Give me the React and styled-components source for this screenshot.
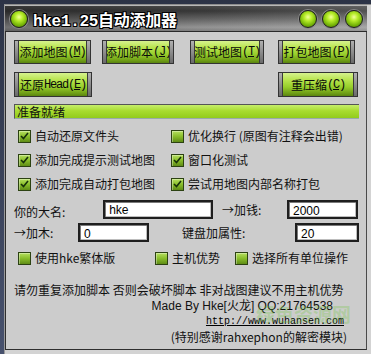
import React from 'react';
import styled, { createGlobalStyle } from 'styled-components';

const GlobalStyle = createGlobalStyle`
  html, body { margin: 0; padding: 0; background: #3b4560; overflow: hidden; }
  #root { width: 371px; height: 354px; }
`;

const CJK = `"Noto Sans CJK SC", "Noto Sans", sans-serif`;
const MONO = `"Liberation Mono", "Noto Sans CJK SC", monospace`;

const Screen = styled.div`
  width: 371px;
  height: 354px;
  box-sizing: border-box;
  padding: 4px 0 0 4px;
  background: linear-gradient(to bottom, #2c3346, #47516d);
  display: flex;
`;

const Window = styled.div`
  flex: 1;
  display: flex;
  flex-direction: column;
  background: #d3d3d3;
  border-top: 1px solid #8c8c8c;
  border-left: 1px solid #9a9a9a;
  padding: 0 5px 4px 0;
`;

const TitleBar = styled.div`
  height: 27px;
  box-sizing: border-box;
  display: flex;
  align-items: center;
  padding: 0 4px 0 4px;
  border-top: 1px solid #b8b8b8;
  border-bottom: 1px solid #2a2a2a;
  background:
    linear-gradient(to right, rgba(0, 0, 0, 0.28), rgba(0, 0, 0, 0.05) 55%, rgba(255, 255, 255, 0.12)),
    linear-gradient(to bottom, #4c4c4c 0%, #3a3a3a 20%, #6c6c6c 55%, #9c9c9c 85%, #858585 100%);
`;

const Ball = styled.span`
  width: 18px;
  height: 18px;
  box-sizing: border-box;
  border-radius: 50%;
  flex: none;
  border: 1px solid #1e1e1e;
  box-shadow: 0 0 0 1px #8a8a8a;
  margin-left: ${(p) => p.$ml || 0}px;
  background: radial-gradient(circle at 50% 38%, #f2ff9a 0%, #b6ec2a 30%, #7ab80a 62%, #3d6a00 100%);
`;

const TitleText = styled.span`
  margin-left: 5px;
  flex: 1;
  font-family: ${MONO};
  font-size: 16px;
  font-weight: bold;
  color: #ffffff;
  letter-spacing: -0.3px;
  text-shadow: 1px 1px 0 #000, -1px -1px 0 #000, 1px -1px 0 #000, -1px 1px 0 #000, 0 1px 0 #000, 1px 0 0 #000;
`;

const Panel = styled.div`
  flex: 1;
  display: flex;
  flex-direction: column;
  background: #cccccc;
  border-left: 1px solid #2e2e2e;
  border-right: 1px solid #4a4a4a;
  border-bottom: 1px solid #2e2e2e;
  padding: 8px 7px 0 8px;
  position: relative;
  font-family: ${CJK};
  font-size: 12px;
  color: #111;
`;

const ButtonGrid = styled.div`
  display: grid;
  grid-template-columns: 88px 88px 88px auto;
  grid-template-rows: 24px 25px;
  row-gap: 8px;
`;

const Btn = styled.div`
  grid-column: ${(p) => p.$col || 'auto'};
  grid-row: ${(p) => p.$row || 'auto'};
  width: ${(p) => p.$w}px;
  height: 100%;
  box-sizing: border-box;
  border: 1px solid #333;
  position: relative;
  display: flex;
  align-items: center;
  justify-content: center;
  font-size: 12px;
  line-height: 1;
  color: #0a0a0a;
  background: linear-gradient(to bottom, #d6f28e 0%, #b8e44e 30%, #98cf2c 60%, #6f9e16 88%, #5a8410 100%);
  &::before,
  &::after {
    content: '';
    position: absolute;
    top: 0;
    bottom: 0;
    width: 3px;
    background: linear-gradient(to bottom, #b0b0b0, #6a6a6a);
  }
  &::before { left: 0; border-right: 1px solid #3a3a3a; }
  &::after { right: 0; border-left: 1px solid #3a3a3a; }
`;

const Key = styled.span`
  font-family: ${MONO};
  font-size: 12px;
  letter-spacing: -1.2px;
  u { text-underline-offset: 1px; }
`;

const Status = styled.div`
  margin-top: 7px;
  height: 15px;
  box-sizing: border-box;
  border-top: 1px solid #555;
  border-left: 1px solid #555;
  border-bottom: 1px solid #9aa;
  display: flex;
  align-items: center;
  padding-left: 2px;
  line-height: 1;
  background: linear-gradient(to bottom, #c6ee6a 0%, #a8dc30 45%, #92cc1c 100%);
`;

const CheckGrid = styled.div`
  margin-top: 5px;
  display: grid;
  grid-template-columns: ${(p) => p.$cols};
  grid-auto-rows: ${(p) => p.$rowH}px;
  padding-left: 4px;
`;

const CheckItem = styled.label`
  display: flex;
  align-items: center;
  gap: 4px;
  white-space: nowrap;
  line-height: 1;
`;

const Box = styled.span`
  width: 13px;
  height: 13px;
  box-sizing: border-box;
  flex: none;
  border: 1px solid #2c4212;
  display: flex;
  align-items: center;
  justify-content: center;
  background: linear-gradient(to bottom, #b6e060 0%, #88bd2a 50%, #5f8c16 100%);
  box-shadow: inset 1px 1px 0 rgba(255, 255, 255, 0.35);
`;

const Check = ({ checked, children }) => (
  <CheckItem>
    <Box>
      {checked && (
        <svg width="9" height="8" viewBox="0 0 9 8">
          <path d="M1 4 L3.5 6.5 L8 1" fill="none" stroke="#17300a" strokeWidth="1.6" />
        </svg>
      )}
    </Box>
    <span>{children}</span>
  </CheckItem>
);

const FieldRow = styled.div`
  margin-top: 4px;
  height: ${(p) => p.$h}px;
  display: flex;
  align-items: center;
`;

const Label = styled.span`
  width: ${(p) => p.$w}px;
  flex: none;
  margin-left: ${(p) => p.$ml || 0}px;
  white-space: nowrap;
  line-height: 1;
  padding-top: ${(p) => p.$pt || 0}px;
`;

const Input = styled.div`
  width: ${(p) => p.$w}px;
  height: 100%;
  flex: none;
  box-sizing: border-box;
  border: 2px solid #1e1e1e;
  box-shadow: inset 1px 1px 0 #7a7a7a, inset -1px -1px 0 #bdbdbd;
  background: #fff;
  display: flex;
  align-items: center;
  padding: 2px 0 0 4px;
  font-family: ${(p) => (p.$mono ? MONO : `"Liberation Sans", Arial, sans-serif`)};
  font-size: 12px;
  letter-spacing: ${(p) => (p.$mono ? '-1px' : '0')};
  color: #000;
`;

const Notes = styled.div`
  margin-top: 13px;
  display: flex;
  flex-direction: column;
`;

const Line = styled.div`
  height: ${(p) => p.$h || 15}px;
  display: flex;
  align-items: center;
  justify-content: ${(p) => (p.$right ? 'flex-end' : 'flex-start')};
  padding-right: ${(p) => p.$pr || 0}px;
  white-space: nowrap;
  line-height: 1;
  font-family: ${(p) => (p.$sans ? `"Liberation Sans", "Noto Sans CJK SC", sans-serif` : CJK)};
`;

const Link = styled.span`
  font-family: "Liberation Mono", monospace;
  font-size: 10px;
  text-decoration: underline;
  color: #000;
`;

const Watermark = styled.span`
  position: absolute;
  left: 250px;
  top: 268px;
  font-family: ${CJK};
  font-size: 19px;
  font-weight: bold;
  color: rgba(110, 200, 60, 0.3);
  pointer-events: none;
`;

export default function App() {
  return (
    <>
      <GlobalStyle />
      <Screen>
        <Window>
          <TitleBar>
            <Ball $ml={1} />
            <TitleText>hke1.25自动添加器</TitleText>
            <Ball />
            <Ball $ml={5} />
            <Ball $ml={5} />
          </TitleBar>
          <Panel>
            <ButtonGrid>
              <Btn $w={77}>添加地图<Key>(<u>M</u>)</Key></Btn>
              <Btn $w={72}>添加脚本<Key>(<u>J</u>)</Key></Btn>
              <Btn $w={74}>测试地图<Key>(<u>T</u>)</Key></Btn>
              <Btn $w={77}>打包地图<Key>(<u>P</u>)</Key></Btn>
              <Btn $w={78} $col={1} $row={2}>还原<Key>Head(<u>E</u>)</Key></Btn>
              <Btn $w={80} $col={4} $row={2}>重压缩<Key>(<u>C</u>)</Key></Btn>
            </ButtonGrid>
            <Status>准备就绪</Status>
            <CheckGrid $cols="153px auto" $rowH={24}>
              <Check checked>自动还原文件头</Check>
              <Check>优化换行 (原图有注释会出错)</Check>
              <Check checked>添加完成提示测试地图</Check>
              <Check checked>窗口化测试</Check>
              <Check checked>添加完成自动打包地图</Check>
              <Check checked>尝试用地图内部名称打包</Check>
            </CheckGrid>
            <FieldRow $h={19}>
              <Label $w={89} $pt={5}>你的大名:</Label>
              <Input $w={110} $mono>hke</Input>
              <Label $w={65} $ml={9}>→加钱:</Label>
              <Input $w={71}>2000</Input>
            </FieldRow>
            <FieldRow $h={19}>
              <Label $w={64}>→加木:</Label>
              <Input $w={71}>0</Input>
              <Label $w={113} $ml={33}>键盘加属性:</Label>
              <Input $w={64}>20</Input>
            </FieldRow>
            <CheckGrid $cols="137px 80px auto" $rowH={22}>
              <Check>使用hke繁体版</Check>
              <Check>主机优势</Check>
              <Check>选择所有单位操作</Check>
            </CheckGrid>
            <Notes>
              <Line $h={16}>请勿重复添加脚本 否则会破坏脚本 非对战图建议不用主机优势</Line>
              <Line $h={16} $right $sans $pr={26}>Made By Hke[火龙] QQ:21764538</Line>
              <Line $h={15} $right $pr={15}><Link>http://www.wuhansen.com</Link></Line>
              <Line $h={15} $right $pr={12}>(特别感谢rahxephon的解密模块)</Line>
            </Notes>
            <Watermark>绿色资源网</Watermark>
          </Panel>
        </Window>
      </Screen>
    </>
  );
}
